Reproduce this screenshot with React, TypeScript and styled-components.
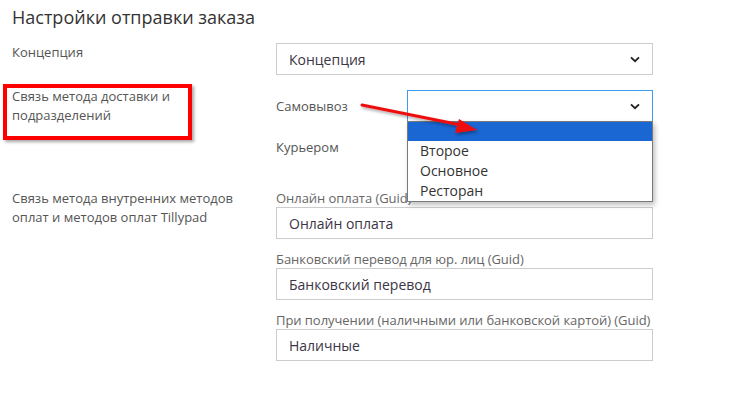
import React from 'react';
import styled, { createGlobalStyle } from 'styled-components';

const GlobalStyle = createGlobalStyle`
    body {
        margin: 0;
        background: #ffffff;
        font-family: "Open Sans", "Noto Sans", sans-serif;
    }
`;

const Page = styled.div`
    position: relative;
    width: 740px;
    height: 395px;
    padding: 5px 0 0 12px;
    box-sizing: border-box;
    overflow: hidden;
`;

const Title = styled.h2`
    margin: 0 0 13px 0;
    font-size: 18px;
    line-height: 25px;
    font-weight: 400;
    color: #333333;
`;

const Row = styled.div<{ $gap?: number }>`
    display: grid;
    grid-template-columns: 264px 377px;
    align-items: start;
    margin-bottom: ${(p) => p.$gap ?? 0}px;
`;

const RowLabel = styled.div<{ $offset?: number }>`
    width: 236px;
    font-size: 13px;
    line-height: 19px;
    color: #555555;
    margin-top: ${(p) => p.$offset ?? 0}px;
`;

const Highlighted = styled.div`
    position: relative;
    &::after {
        content: '';
        position: absolute;
        left: -9px;
        top: -6px;
        width: 189px;
        height: 56px;
        box-sizing: border-box;
        border: 4px solid #ff0000;
        box-shadow: 2px 2px 3px rgba(0, 0, 0, 0.35);
    }
`;

const Select = styled.div<{ $focused?: boolean }>`
    position: relative;
    height: 32px;
    box-sizing: border-box;
    border: 1px solid ${(p) => (p.$focused ? '#3d9cf0' : '#cccccc')};
    padding: 0 12px;
    display: flex;
    align-items: center;
    justify-content: space-between;
    font-size: 14px;
    color: #3b3545;
    background: #ffffff;
`;

const Chevron = () => (
    <svg width="10" height="7" viewBox="0 0 10 7">
        <path d="M1 1.3 L5 5.2 L9 1.3" fill="none" stroke="#222" strokeWidth="1.8" />
    </svg>
);

const MethodList = styled.div`
    display: flex;
    flex-direction: column;
    gap: 9px;
`;

const MethodRow = styled.div`
    display: grid;
    grid-template-columns: 131px 246px;
    align-items: center;
`;

const MethodName = styled.span`
    font-size: 13px;
    color: #555555;
`;

const SelectWrap = styled.div`
    position: relative;
`;

const Popup = styled.div`
    position: absolute;
    left: 0;
    top: 31px;
    width: 246px;
    box-sizing: border-box;
    border: 1px solid #7a7a7a;
    background: #ffffff;
    box-shadow: 2px 3px 5px rgba(0, 0, 0, 0.25);
    z-index: 2;
`;

const Option = styled.div<{ $active?: boolean }>`
    height: ${(p) => (p.$active ? 19 : 20)}px;
    line-height: 20px;
    padding-left: 12px;
    font-size: 14px;
    color: #333333;
    background: ${(p) => (p.$active ? '#1a66d2' : 'transparent')};
`;

const Fields = styled.div`
    display: flex;
    flex-direction: column;
    gap: 11px;
`;

const Field = styled.div`
    display: flex;
    flex-direction: column;
`;

const FieldLabel = styled.label`
    font-size: 13px;
    line-height: 18px;
    color: #666666;
    white-space: nowrap;
    letter-spacing: -0.05px;
`;

const Input = styled.div`
    height: 32px;
    box-sizing: border-box;
    border: 1px solid #cccccc;
    padding: 0 12px;
    display: flex;
    align-items: center;
    font-size: 14px;
    color: #3b3545;
`;

const ArrowLayer = styled.svg`
    position: absolute;
    left: 355px;
    top: 95px;
    z-index: 3;
    overflow: visible;
`;

const RedArrow = () => (
    <ArrowLayer width="130" height="45" viewBox="0 0 130 45">
        <defs>
            <filter id="sh" x="-20%" y="-50%" width="140%" height="200%">
                <feDropShadow dx="1.5" dy="2" stdDeviation="1.5" floodColor="#000" floodOpacity="0.35" />
            </filter>
        </defs>
        <g filter="url(#sh)">
            <line x1="7" y1="10" x2="106" y2="30" stroke="#ee1111" strokeWidth="3" strokeLinecap="round" />
            <polygon points="122,35 100,38 104,24" fill="#ee1111" />
        </g>
    </ArrowLayer>
);

const App: React.FC = () => {
    const methods = ['Самовывоз', 'Курьером'];
    const options = ['', 'Второе', 'Основное', 'Ресторан'];

    return (
        <>
            <GlobalStyle />
            <Page>
                <Title>Настройки отправки заказа</Title>

                <Row $gap={15}>
                    <RowLabel>Концепция</RowLabel>
                    <Select>
                        <span>Концепция</span>
                        <Chevron />
                    </Select>
                </Row>

                <Row $gap={26}>
                    <Highlighted>
                        <RowLabel $offset={-3}>Связь метода доставки и подразделений</RowLabel>
                    </Highlighted>
                    <MethodList>
                        {methods.map((m, i) => (
                            <MethodRow key={m}>
                                <MethodName>{m}</MethodName>
                                <SelectWrap>
                                    <Select $focused={i === 0}>
                                        <span></span>
                                        <Chevron />
                                    </Select>
                                    {i === 0 && (
                                        <Popup>
                                            {options.map((o, j) => (
                                                <Option key={j} $active={j === 0}>{o}</Option>
                                            ))}
                                        </Popup>
                                    )}
                                </SelectWrap>
                            </MethodRow>
                        ))}
                    </MethodList>
                </Row>

                <Row>
                    <RowLabel>Связь метода внутренних методов оплат и методов оплат Tillypad</RowLabel>
                    <Fields>
                        <Field>
                            <FieldLabel>Онлайн оплата (Guid)</FieldLabel>
                            <Input>Онлайн оплата</Input>
                        </Field>
                        <Field>
                            <FieldLabel>Банковский перевод для юр. лиц (Guid)</FieldLabel>
                            <Input>Банковский перевод</Input>
                        </Field>
                        <Field>
                            <FieldLabel>При получении (наличными или банковской картой) (Guid)</FieldLabel>
                            <Input>Наличные</Input>
                        </Field>
                    </Fields>
                </Row>

                <RedArrow />
            </Page>
        </>
    );
};

export default App;
